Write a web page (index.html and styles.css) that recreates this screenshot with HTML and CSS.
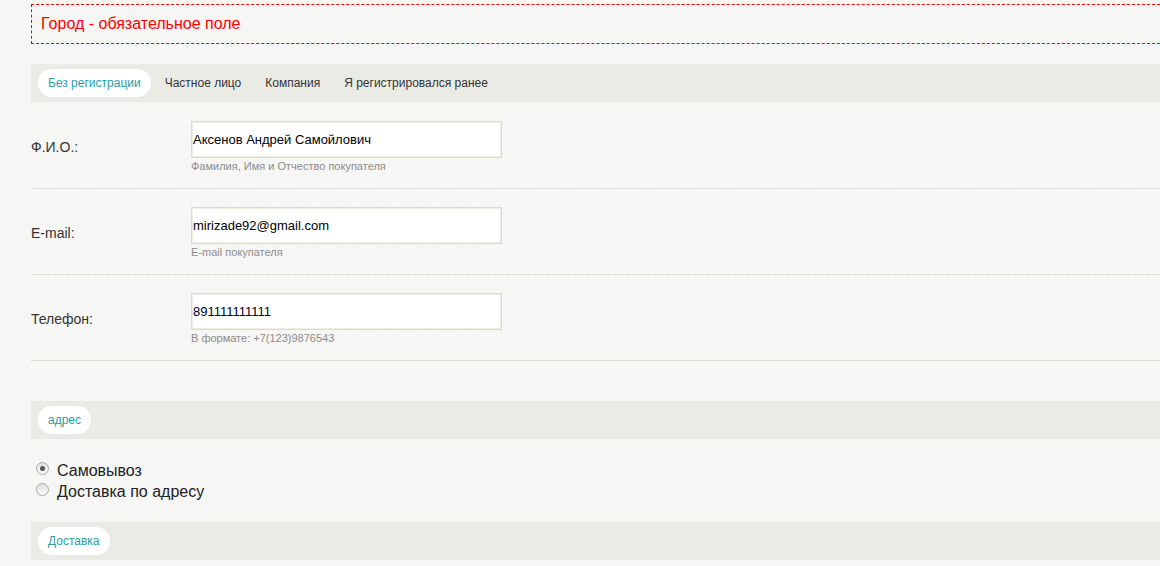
FILE: index.html
```html
<!DOCTYPE html>
<html lang="ru">
<head>
<meta charset="utf-8">
<title>Оформление заказа</title>
<link rel="stylesheet" href="styles.css">
</head>
<body>
<div class="page">
  <div class="error-box">Город - обязательное поле</div>

  <div class="tabbar">
    <span class="tab active">Без регистрации</span>
    <span class="tab">Частное лицо</span>
    <span class="tab">Компания</span>
    <span class="tab">Я регистрировался ранее</span>
  </div>

  <div class="row">
    <div class="label">Ф.И.О.:</div>
    <div class="field">
      <div class="input">Аксенов Андрей Самойлович</div>
      <div class="hint">Фамилия, Имя и Отчество покупателя</div>
    </div>
  </div>
  <div class="row">
    <div class="label">E-mail:</div>
    <div class="field">
      <div class="input">mirizade92@gmail.com</div>
      <div class="hint">E-mail покупателя</div>
    </div>
  </div>
  <div class="row">
    <div class="label">Телефон:</div>
    <div class="field">
      <div class="input phone">891111111111</div>
      <div class="hint">В формате: +7(123)9876543</div>
    </div>
  </div>

  <div class="tabbar section">
    <span class="tab active">адрес</span>
  </div>

  <div class="radios">
    <div class="radio-line"><span class="radio checked"></span>Самовывоз</div>
    <div class="radio-line"><span class="radio"></span>Доставка по адресу</div>
  </div>

  <div class="tabbar">
    <span class="tab active">Доставка</span>
  </div>
</div>
</body>
</html>
```

FILE: styles.css
```css
html, body {
  margin: 0;
  padding: 0;
  overflow: hidden;
}
body {
  font-family: "Liberation Sans", Arial, sans-serif;
  color: #333;
  background-color: #f5f5f3;
  background-image:
    conic-gradient(#f7f7f5 0 25%, transparent 0 50%, #f7f7f5 0 75%, transparent 0);
  background-size: 10px 10px;
  height: 566px;
}
.page {
  margin-left: 31px;
  margin-right: -30px;
  padding-top: 4px;
}
.error-box {
  border: 1px dashed #ff0000;
  height: 38px;
  box-sizing: content-box;
  padding-left: 9px;
  font-size: 16px;
  line-height: 37px;
  color: #ff0000;
}
.tabbar {
  margin-top: 20px;
  background: #ebebe6;
  height: 38px;
  box-sizing: border-box;
  padding: 5px 7px;
  display: flex;
  gap: 4px;
}
.tab {
  display: block;
  height: 28px;
  line-height: 28px;
  padding: 0 10px;
  border-radius: 14px;
  font-size: 12px;
  color: #333;
}
.tab.active {
  background: #fff;
  color: #2a9ea3;
}
.row {
  display: flex;
  align-items: center;
  padding: 19px 0 15px;
  border-bottom: 1px solid #dcdfca;
}
.row + .row {
  padding-top: 18px;
}
.label {
  width: 160px;
  font-size: 14px;
  color: #333;
  padding-top: 0;
}
.field {
  display: flex;
  flex-direction: column;
}
.input {
  width: 311px;
  height: 37px;
  box-sizing: border-box;
  background: #fff;
  border: 1px solid #d9dacb;
  box-shadow: inset 0 0 0 1px #eeeee6;
  padding-left: 1px;
  font-size: 13px;
  line-height: 35px;
  color: #000;
}
.input.phone {
  color: #000033;
}
.hint {
  margin-top: 1px;
  font-size: 11px;
  line-height: 14px;
  color: #8c8c8c;
}
.tabbar.section {
  margin-top: 40px;
}
.radios {
  padding-top: 21px;
}
.radio-line {
  display: flex;
  align-items: center;
  height: 21px;
  font-size: 16px;
  color: #222;
}
.radio {
  width: 11px;
  height: 11px;
  border-radius: 50%;
  border: 1px solid #a8a8a8;
  background: linear-gradient(#e2e2e2, #fafafa);
  margin: 0 8px 0 5px;
  position: relative;
  top: -2px;
  box-sizing: content-box;
}
.radio.checked::after {
  content: "";
  position: absolute;
  left: 3px;
  top: 3px;
  width: 5px;
  height: 5px;
  border-radius: 50%;
  background: #555;
}
```
